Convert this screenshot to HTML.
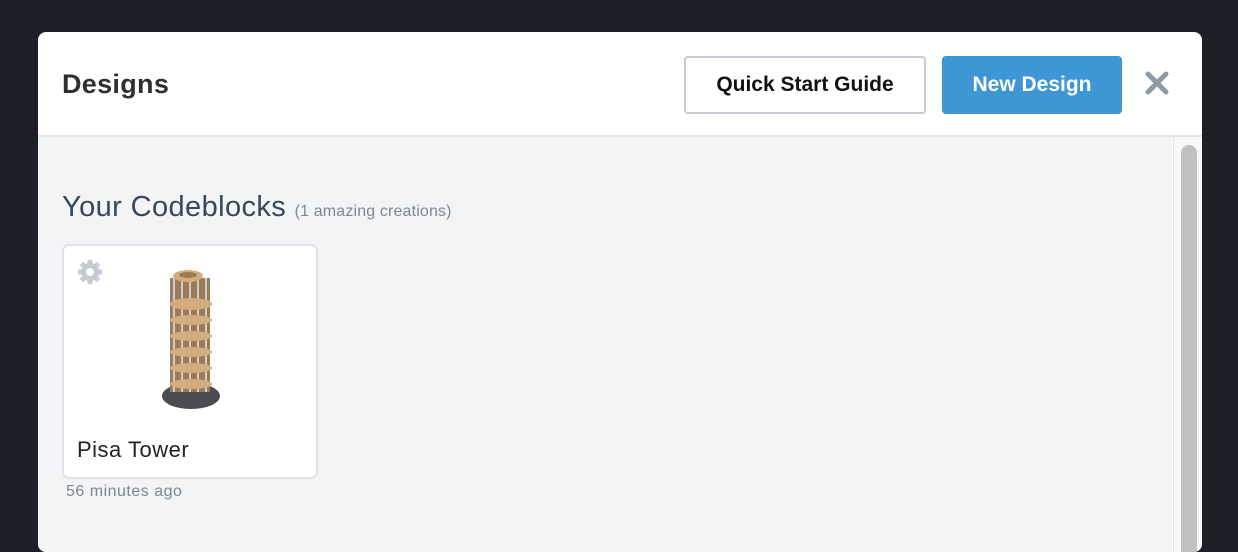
<!DOCTYPE html>
<html><head><style>
body{margin:0;width:1238px;height:530px;background:#1c1f26;font-family:"Liberation Sans",sans-serif;overflow:hidden;position:relative}
.modal{position:absolute;left:38px;top:32px;width:1164px;height:520px;background:#fff;border-radius:8px;overflow:hidden}
.hdr{height:103px;border-bottom:2px solid #e3e5e8;position:relative}
.hdr h1{position:absolute;left:24px;top:37px;margin:0;font-size:27px;font-weight:bold;color:#2d2f33;letter-spacing:0.3px}
.btn{position:absolute;top:24px;height:58px;box-sizing:border-box;border-radius:4px;font-size:21px;font-weight:bold;display:flex;align-items:center;justify-content:center}
.q{left:646px;width:242px;border:2px solid #c6ccd2;color:#111}
.n{left:904px;width:180px;background:#3f96d5;color:#fff}
.x{position:absolute;left:1106px;top:38px}
.content{position:absolute;left:0;top:105px;width:1134px;height:420px;background:#f3f4f6}
.track{position:absolute;left:1135px;top:105px;width:29px;height:420px;background:#f8f8f8;border-left:1px solid #e4e4e4}
.thumb{position:absolute;left:7px;top:8px;width:16px;height:420px;background:#c1c1c1;border-radius:8px}
.title{position:absolute;left:24px;top:54px;font-size:29px;color:#35485e;letter-spacing:0.4px}
.title small{font-size:16px;color:#7d8793;letter-spacing:0.15px}
.card{position:absolute;left:24px;top:107px;width:256px;height:235px;box-sizing:border-box;background:#fff;border:2px solid #dfe2e6;border-radius:7px}
.card .nm{position:absolute;left:13px;top:191px;font-size:22px;color:#222;letter-spacing:0.5px}
.ago{position:absolute;left:28px;top:346px;font-size:16px;color:#7d8793;letter-spacing:0.5px}
</style></head><body>
<div class="modal">
<div class="hdr"><h1>Designs</h1>
<div class="btn q">Quick Start Guide</div>
<div class="btn n">New Design</div>
<svg class="x" width="26" height="26" viewBox="0 0 26 26"><path d="M4 4L22 22M22 4L4 22" stroke="#8f9aa6" stroke-width="5" stroke-linecap="round"/></svg>
</div>
<div class="content">
<div class="title">Your Codeblocks <small>(1 amazing creations)</small></div>
<div class="card">
<svg style="position:absolute;left:12px;top:12px" width="28" height="28" viewBox="0 0 28 28"><g fill="#c3cad2"><circle cx="14" cy="14" r="9"/><g stroke="#c3cad2" stroke-width="5"><path d="M14 2v24M2 14h24M5.5 5.5l17 17M22.5 5.5l-17 17"/></g></g><circle cx="14" cy="14" r="4" fill="#fff"/></svg>
<svg style="position:absolute;left:94px;top:22px" width="66" height="150" viewBox="0 0 66 150">
<ellipse cx="33" cy="128" rx="29" ry="13" fill="#4a4c4f"/>
<rect x="12" y="10" width="40" height="114" fill="#9c7b55"/>
<g stroke="#c9cdd3" stroke-width="2"><path d="M16 10v114M24 10v114M32 10v114M40 10v114M48 10v114"/></g>
<g fill="#d3ad7e"><ellipse cx="30" cy="8" rx="15" ry="6"/><ellipse cx="33" cy="36" rx="21" ry="6"/><ellipse cx="33" cy="52" rx="21" ry="5"/><ellipse cx="33" cy="68" rx="21" ry="5"/><ellipse cx="33" cy="84" rx="21" ry="5"/><ellipse cx="33" cy="100" rx="21" ry="5"/><ellipse cx="33" cy="116" rx="21" ry="5"/></g>
<ellipse cx="30" cy="7" rx="9" ry="3" fill="#9c7b55"/>
</svg>
<div class="nm">Pisa Tower</div>
</div>
<div class="ago">56 minutes ago</div>
</div>
<div class="track"><div class="thumb"></div></div>
</div>
</body></html>
